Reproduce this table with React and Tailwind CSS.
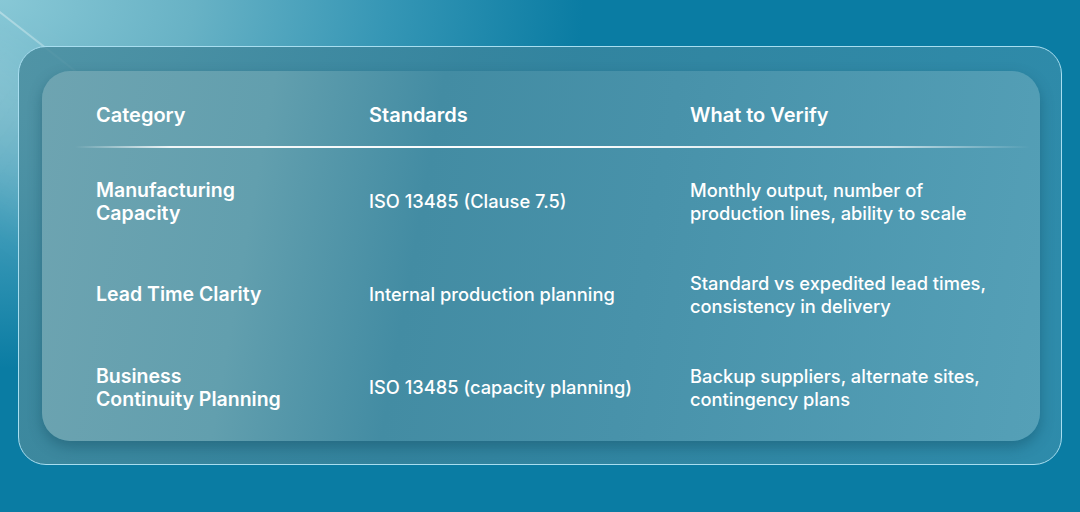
import React from "react";

const rows = [
  {
    category: ["Manufacturing", "Capacity"],
    standard: "ISO 13485 (Clause 7.5)",
    verify: ["Monthly output, number of", "production lines, ability to scale"],
  },
  {
    category: ["Lead Time Clarity"],
    standard: "Internal production planning",
    verify: ["Standard vs expedited lead times,", "consistency in delivery"],
  },
  {
    category: ["Business", "Continuity Planning"],
    standard: "ISO 13485 (capacity planning)",
    verify: ["Backup suppliers, alternate sites,", "contingency plans"],
  },
];

const Lines = ({ lines }) =>
  lines.map((l, i) => (
    <span key={i} className="block">
      {l}
    </span>
  ));

const App = () => {
  return (
    <div
      className="relative w-[1080px] h-[512px] overflow-hidden bg-[radial-gradient(ellipse_60%_80%_at_0%_0%,#88c8d6_0%,#68b2c5_30%,#3596b5_60%,#0a7ca3_90%),linear-gradient(180deg,#0679a0,#0d80a6)] px-[18px] pt-[46px]"
      style={{ fontFamily: "Inter, 'Noto Sans', sans-serif" }}
    >
      {/* light streaks */}
      <div className="absolute left-[-40px] top-[-20px] w-[360px] h-[2px] rotate-[38deg] origin-left bg-gradient-to-r from-white/40 to-transparent" />
      <div className="absolute left-[-60px] top-[20px] w-[420px] h-[120px] rotate-[38deg] origin-left bg-gradient-to-r from-white/15 to-transparent blur-xl" />

      <div className="relative w-[1044px] h-[419px] rounded-[28px] border border-[#a8def0] bg-[linear-gradient(100deg,rgba(72,140,158,0.85)_0%,rgba(58,132,156,0.85)_40%,rgba(52,142,172,0.85)_100%)] pl-[23px] pr-[21px] pt-[24px] pb-[23px]">
        <div className="w-full h-full rounded-[28px] bg-[linear-gradient(100deg,#6ea4b1_0%,#629fae_22%,#438ca3_38%,#4892aa_60%,#55a0b7_100%)] shadow-[0_6px_14px_rgba(10,60,80,0.35)] text-white">
          <div className="grid grid-cols-[273px_321px_1fr] px-[54px] pt-[32px] pb-[18px] text-[20px] leading-[25px] font-semibold">
            <div>Category</div>
            <div>Standards</div>
            <div>What to Verify</div>
          </div>
          <div className="ml-[33px] mr-[10px] h-[2px] bg-[linear-gradient(90deg,rgba(255,255,255,0)_0%,rgba(255,255,255,0.9)_10%,#ffffff_50%,rgba(255,255,255,0.7)_85%,rgba(255,255,255,0)_100%)]" />
          <div className="pt-[7px]">
            {rows.map((r, idx) => (
              <div
                key={idx}
                className="grid grid-cols-[273px_321px_1fr] items-center px-[54px] h-[93px] text-[18.3px] leading-[23px]"
              >
                <div className="font-semibold text-[19.5px]">
                  <Lines lines={r.category} />
                </div>
                <div className="font-medium">{r.standard}</div>
                <div className="font-medium">
                  <Lines lines={r.verify} />
                </div>
              </div>
            ))}
          </div>
        </div>
      </div>
    </div>
  );
};

export default App;
